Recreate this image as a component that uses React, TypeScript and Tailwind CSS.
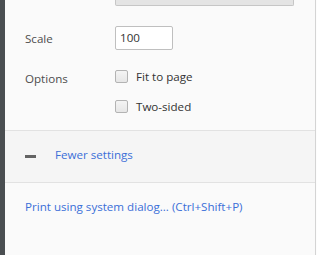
import React from "react";

export default function App() {
  return (
    <div
      className="w-[317px] h-[255px] flex bg-[#fafafa] overflow-hidden"
      style={{ fontFamily: '"Open Sans", "Noto Sans", sans-serif' }}
    >
      <div className="w-[5px] h-full bg-[#4a4e51] shrink-0" />
      <div className="w-[310px] h-full flex flex-col shrink-0">
        <div className="ml-[110px] w-[179px] h-[6px] bg-[#e4e4e4] border border-t-0 border-[#c6c6c6] rounded-b-[2px]" />
        <div className="mt-[20px] flex items-center h-[24px]">
          <div className="w-[110px] pl-[20px] text-[11.6px] text-[#4d4d4d] mt-[2px]">Scale</div>
          <div className="w-[58px] h-[24px] border border-[#bfbfbf] rounded-[2px] bg-white flex items-center pl-[4px] text-[11.6px] text-[#333]">
            100
          </div>
        </div>
        <div className="mt-[11px] flex">
          <div className="w-[110px] pl-[20px] h-[30px] flex items-center text-[11.6px] text-[#4d4d4d] mt-[3px]">
            Options
          </div>
          <div className="flex flex-col">
            <div className="h-[30px] flex items-center">
              <div className="w-[13px] h-[13px] border border-[#b3b3b3] rounded-[2px] bg-gradient-to-b from-[#f4f4f4] to-[#e6e6e6]" />
              <span className="ml-[8px] text-[11.6px] text-[#333] mt-[1px]">Fit to page</span>
            </div>
            <div className="h-[30px] flex items-center">
              <div className="w-[13px] h-[13px] border border-[#b3b3b3] rounded-[2px] bg-gradient-to-b from-[#f4f4f4] to-[#e6e6e6]" />
              <span className="ml-[8px] text-[11.6px] text-[#333] mt-[1px]">Two-sided</span>
            </div>
          </div>
        </div>
        <div className="mt-[9px] h-[53px] border-t border-b border-[#e2e2e2] bg-[#f5f5f5] flex items-center">
          <div className="ml-[20px] w-[11px] h-[3px] bg-[#646464]" />
          <span className="ml-[19px] text-[11.6px] text-[#3b6fd8] -mt-[3px]">Fewer settings</span>
        </div>
        <div className="pt-[15px] pl-[20px] text-[11.6px] leading-[18px] text-[#3b6fd8]">
          Print using system dialog... (Ctrl+Shift+P)
        </div>
      </div>
      <div className="w-[1px] h-full bg-[#d4d4d4] shrink-0" />
      <div className="w-[1px] h-full bg-[#fdfdfd] shrink-0" />
    </div>
  );
}
